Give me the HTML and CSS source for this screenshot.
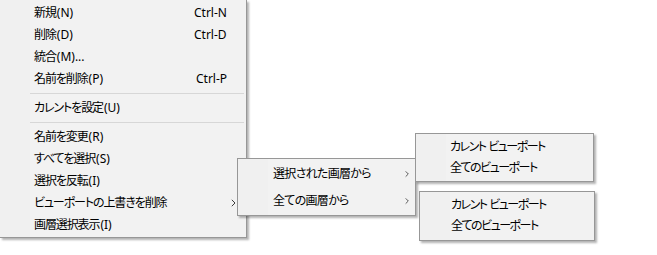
FILE: index.html
```html
<!DOCTYPE html>
<html lang="ja">
<head>
  <meta charset="UTF-8">
  <title>画層メニュー</title>
  <link rel="stylesheet" href="styles.css">
</head>
<body>

<div class="desk">
  <div class="menu main">
    <div class="item"><span class="label">新規<span class="acc">(N)</span></span><span class="key">Ctrl-N</span></div>
    <div class="item"><span class="label">削除<span class="acc">(D)</span></span><span class="key">Ctrl-D</span></div>
    <div class="item"><span class="label">統合<span class="acc">(M)...</span></span></div>
    <div class="item"><span class="label">名前を削除<span class="acc">(P)</span></span><span class="key key-p">Ctrl-P</span></div>
    <div class="sep"></div>
    <div class="item"><span class="label">カレントを設定<span class="acc">(U)</span></span></div>
    <div class="sep"></div>
    <div class="item"><span class="label">名前を変更<span class="acc">(R)</span></span></div>
    <div class="item"><span class="label">すべてを選択<span class="acc">(S)</span></span></div>
    <div class="item"><span class="label">選択を反転<span class="acc">(I)</span></span></div>
    <div class="item">
      <span class="label">ビューポートの上書きを削除</span>
      <svg class="arrow" width="5" height="8" viewBox="0 0 5 8"><polyline points="0.8,0.8 4,4 0.8,7.2"/></svg>
    </div>
    <div class="item"><span class="label">画層選択表示<span class="acc">(I)</span></span></div>
  </div>

  <!-- サブメニュー -->
  <div class="menu sub sub1">
    <div class="item tall">
      <span class="label">選択された画層から</span>
      <svg class="arrow" width="5" height="8" viewBox="0 0 5 8"><polyline points="0.8,0.8 4,4 0.8,7.2"/></svg>
    </div>
    <div class="item tall">
      <span class="label">全ての画層から</span>
      <svg class="arrow" width="5" height="8" viewBox="0 0 5 8"><polyline points="0.8,0.8 4,4 0.8,7.2"/></svg>
    </div>
  </div>

  <div class="menu sub sub2">
    <div class="item short"><span class="label">カレント ビューポート</span></div>
    <div class="item short"><span class="label">全てのビューポート</span></div>
  </div>

  <div class="menu sub sub3">
    <div class="item short"><span class="label">カレント ビューポート</span></div>
    <div class="item short"><span class="label">全てのビューポート</span></div>
  </div>
</div>

</body>
</html>
```

FILE: styles.css
```css
html, body {
  margin: 0;
  padding: 0;
  background: #ffffff;
  font-family: "Noto Sans", "Noto Sans CJK JP", sans-serif;
  font-size: 12px;
  color: #000;
}

.desk {
  position: relative;
  width: 657px;
  height: 255px;
  overflow: hidden;
}

.menu {
  box-sizing: border-box;
  background: linear-gradient(to right, #f0f0f0 30px, #f2f2f2 30px);
  font-feature-settings: "palt";
}

/* メインメニュー */
.main {
  width: 247px;
  padding: 2px 0 1px 0;
  border-right: 1px solid #979797;
  border-bottom: 1px solid #979797;
  box-shadow: 2px 2px 2px rgba(0, 0, 0, 0.3);
}

.item {
  display: flex;
  align-items: center;
  height: 22px;
  padding: 0 10px 0 34px;
  line-height: 1;
  white-space: nowrap;
}

.label {
  width: 160px;
  letter-spacing: -1.1px;
}

.acc {
  letter-spacing: 0;
  margin-left: 1px;
}

.key {
  flex: 1;
}

.key-p {
  padding-left: 2px;
}

.arrow {
  margin-left: auto;
  fill: none;
  stroke: #3c3c3c;
  stroke-width: 1;
}

.sep {
  margin: 3px 2px 3px 30px;
  border-top: 1px solid #d7d7d7;
}

/* サブメニュー */
.sub {
  position: absolute;
  border: 1px solid #979797;
  box-shadow: 2px 2px 2px rgba(0, 0, 0, 0.3);
}

.sub1 {
  left: 237px;
  top: 158px;
  width: 179px;
  padding: 1px 0;
}

.sub1 .item {
  padding: 0 6px 0 35px;
}

.sub1 .label {
  letter-spacing: -0.7px;
}

.tall {
  height: 27px;
}

.sub2 {
  left: 415px;
  top: 133px;
  width: 179px;
  padding: 2px 0 3px;
}

.sub3 {
  left: 419px;
  top: 191px;
  width: 176px;
  padding: 2px 0 4px;
}

.short {
  height: 21px;
}

.sub2 .item {
  padding-left: 34px;
}

.sub3 .item {
  padding-left: 31px;
}

.sub2 .label,
.sub3 .label {
  letter-spacing: -1.5px;
  word-spacing: 1px;
}
```
